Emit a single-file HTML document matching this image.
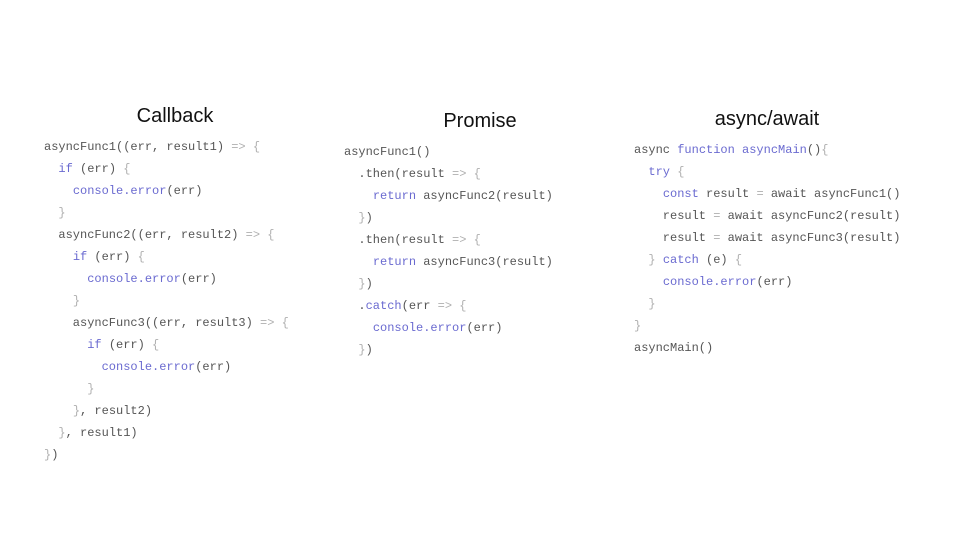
<!DOCTYPE html><html><head><meta charset="utf-8"><style>
body{margin:0;width:960px;height:540px;background:#fff;position:relative;overflow:hidden}
.t{position:absolute;font-family:"Liberation Sans",sans-serif;font-size:20px;color:#111;transform:translateX(-50%);white-space:nowrap}
pre{position:absolute;margin:0;font-family:"Liberation Mono",monospace;font-size:12px;line-height:22px;color:#555}
.k{color:#6a6ad0}.g{color:#b0b0b0}
</style></head><body>
<div class="t" style="left:175px;top:105px">Callback</div>
<div class="t" style="left:480px;top:110px">Promise</div>
<div class="t" style="left:767px;top:108px">async/await</div>
<pre style="left:44px;top:136px">asyncFunc1((err, result1) <span class="g">=&gt; {</span>
  <span class="k">if</span> (err) <span class="g">{</span>
    <span class="k">console.error</span>(err)
  <span class="g">}</span>
  asyncFunc2((err, result2) <span class="g">=&gt; {</span>
    <span class="k">if</span> (err) <span class="g">{</span>
      <span class="k">console.error</span>(err)
    <span class="g">}</span>
    asyncFunc3((err, result3) <span class="g">=&gt; {</span>
      <span class="k">if</span> (err) <span class="g">{</span>
        <span class="k">console.error</span>(err)
      <span class="g">}</span>
    <span class="g">}</span>, result2)
  <span class="g">}</span>, result1)
<span class="g">}</span>)</pre>
<pre style="left:344px;top:141px">asyncFunc1()
  .then(result <span class="g">=&gt; {</span>
    <span class="k">return</span> asyncFunc2(result)
  <span class="g">}</span>)
  .then(result <span class="g">=&gt; {</span>
    <span class="k">return</span> asyncFunc3(result)
  <span class="g">}</span>)
  .<span class="k">catch</span>(err <span class="g">=&gt; {</span>
    <span class="k">console.error</span>(err)
  <span class="g">}</span>)</pre>
<pre style="left:634px;top:139px">async <span class="k">function asyncMain</span>()<span class="g">{</span>
  <span class="k">try</span> <span class="g">{</span>
    <span class="k">const</span> result <span class="g">=</span> await asyncFunc1()
    result <span class="g">=</span> await asyncFunc2(result)
    result <span class="g">=</span> await asyncFunc3(result)
  <span class="g">}</span> <span class="k">catch</span> (e) <span class="g">{</span>
    <span class="k">console.error</span>(err)
  <span class="g">}</span>
<span class="g">}</span>
asyncMain()</pre>
</body></html>
